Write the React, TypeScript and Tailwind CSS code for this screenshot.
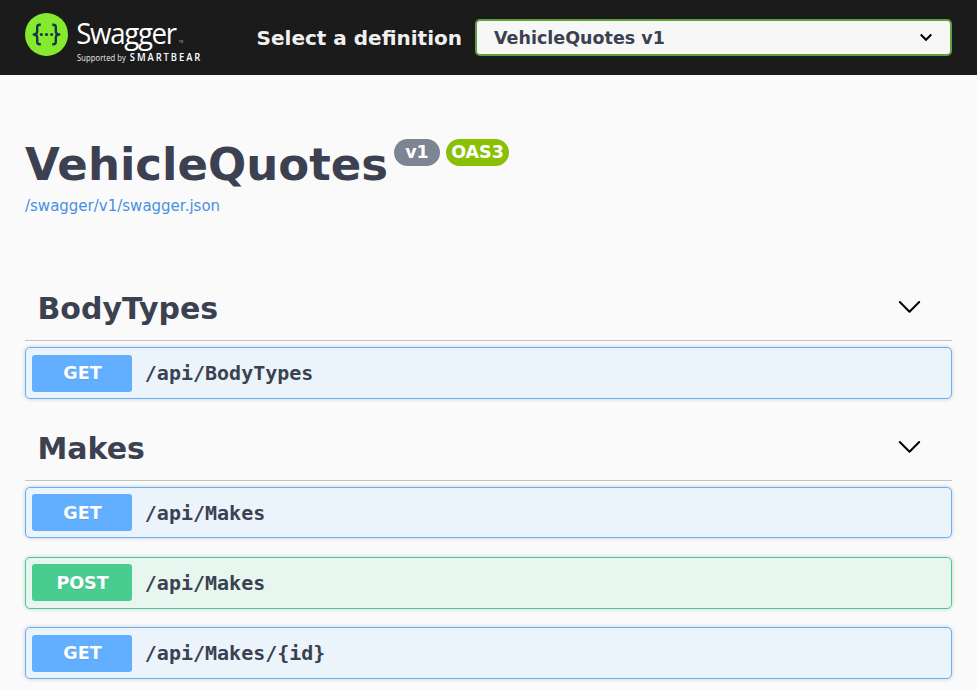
import React from "react";

type Operation = { method: "GET" | "POST"; path: string; box: string; badge: string };

function Logo() {
  return (
    <svg width="180" height="52" viewBox="0 0 180 52" className="block shrink-0" aria-label="Swagger">
      <circle cx="21.5" cy="21.5" r="21.5" fill="#85ea2d" />
      <g fill="none" stroke="#173647" strokeWidth="2.4" strokeLinecap="butt" strokeLinejoin="round">
        <path d="M15.8 11.8 H14.6 Q12.2 11.8 12.2 14.2 V18.3 Q12.2 21.5 8.8 21.5 Q12.2 21.5 12.2 24.7 V28.8 Q12.2 31.2 14.6 31.2 H15.8" />
        <path d="M27.2 11.8 H28.4 Q30.8 11.8 30.8 14.2 V18.3 Q30.8 21.5 34.2 21.5 Q30.8 21.5 30.8 24.7 V28.8 Q30.8 31.2 28.4 31.2 H27.2" />
      </g>
      <g fill="#173647">
        <circle cx="16.3" cy="21.5" r="1.6" />
        <circle cx="21.5" cy="21.5" r="1.6" />
        <circle cx="26.7" cy="21.5" r="1.6" />
      </g>
      <g transform="translate(51.3 30.6) scale(0.96 1)">
        <text x="0" y="0" textLength="105" fill="#fff" fontSize="28.8" className="font-['Open_Sans',sans-serif] font-normal">Swagger</text>
      </g>
      <text x="153.8" y="30.3" fill="#bbb" fontSize="3" className="font-['Open_Sans',sans-serif]">TM</text>
      <g transform="translate(52 47.8) scale(0.88 1)">
        <text x="0" y="0" textLength="55.5" fill="#eee" fontSize="8.6" className="font-['Open_Sans',sans-serif]">Supported by</text>
      </g>
      <g transform="translate(104.8 48) scale(0.94 1)">
        <text x="0" y="0" textLength="75" fill="#fff" fontSize="10" className="font-['Open_Sans',sans-serif] font-semibold">SMARTBEAR</text>
      </g>
    </svg>
  );
}

function TagHeader({ name, margin }: { name: string; margin: string }) {
  return (
    <div className={`flex h-[65px] items-center justify-between border-b border-[#3b4151]/30 pr-[31px] pl-[12.5px] ${margin}`}>
      <h3 className="text-[30px] leading-[35px] font-bold">{name}</h3>
      <svg width="23" height="14" viewBox="0 0 23 14" className="mb-[2px]" fill="none" stroke="#000" strokeWidth="2" strokeLinecap="round" strokeLinejoin="round">
        <path d="M1.8 2 L11.5 11.7 L21.2 2" />
      </svg>
    </div>
  );
}

function OperationRow({ method, path, box, badge }: Operation) {
  const tone = method === "GET" ? "border-[#61affe] bg-[#ebf3fb]" : "border-[#49cc90] bg-[#e8f6f0]";
  const fill = method === "GET" ? "bg-[#61affe]" : "bg-[#49cc90]";
  return (
    <div className={`flex items-start rounded-[5px] border px-[6px] shadow-[0_0_4px_rgba(0,0,0,0.19)] ${tone} ${box}`}>
      <span className={`h-[37px] w-[100px] shrink-0 rounded-[3px] pl-px text-center text-[17.5px] font-bold text-white [text-shadow:0_1px_0_rgba(0,0,0,0.1)] ${fill} ${badge}`}>
        {method}
      </span>
      <span className="mt-[13px] ml-[12.8px] font-['DejaVu_Sans_Mono',monospace] text-[20px] leading-[24px] font-bold">{path}</span>
    </div>
  );
}

const makes: Operation[] = [
  { method: "GET", path: "/api/Makes", box: "mt-[6px] h-[51px]", badge: "mt-[6px] leading-[39px]" },
  { method: "POST", path: "/api/Makes", box: "mt-[19px] h-[52px]", badge: "mt-[6px] leading-[39px]" },
  { method: "GET", path: "/api/Makes/{id}", box: "mt-[18px] h-[52px]", badge: "mt-[7px] leading-[37px]" },
];

export default function App() {
  return (
    <div className="h-[690px] overflow-hidden bg-[#fafafa] font-['DejaVu_Sans',sans-serif] text-[#3b4151]">
      <header className="flex h-[75px] items-start bg-[#1b1b1b] px-[25px] pt-[13px]">
        <Logo />
        <label className="mt-[6px] ml-auto flex items-start">
          <span className="mr-[13px] text-[20px] leading-[39px] font-bold whitespace-nowrap text-[#f0f0f0]">Select a definition</span>
          <span className="flex h-[37px] w-[477px] items-center justify-between rounded-[5px] border-2 border-[#62a03f] bg-[#f7f7f7] pr-[17.5px] pl-[17px] text-[17.5px] font-bold">
            <span className="pt-[2px]">VehicleQuotes v1</span>
            <svg width="14" height="9" viewBox="0 0 14 9" fill="none" stroke="#000" strokeWidth="2">
              <path d="M1.7 1.5 L7 6.8 L12.3 1.5" />
            </svg>
          </span>
        </label>
      </header>
      <main className="px-[25px]">
        <section className="pt-[63px]">
          <div className="flex items-start">
            <h2 className="text-[45px] leading-[54px] font-bold">VehicleQuotes</h2>
            <div className="mt-px ml-[6px] flex gap-[6px] text-[17.5px] leading-[26px] font-bold text-white">
              <span className="h-[27px] w-[46px] rounded-full bg-[#7d8492] text-center">v1</span>
              <span className="h-[27px] w-[63px] rounded-full bg-[#89bf04] text-center">OAS3</span>
            </div>
          </div>
          <a className="mt-[5px] block text-[15px] leading-[18px] text-[#4990e2]">/swagger/v1/swagger.json</a>
        </section>
        <TagHeader name="BodyTypes" margin="mt-[61px]" />
        <OperationRow method="GET" path="/api/BodyTypes" box="mt-[6px] h-[52px]" badge="mt-[7px] leading-[37px]" />
        <TagHeader name="Makes" margin="mt-[17px]" />
        {makes.map((op, i) => <OperationRow key={i} {...op} />)}
      </main>
    </div>
  );
}
